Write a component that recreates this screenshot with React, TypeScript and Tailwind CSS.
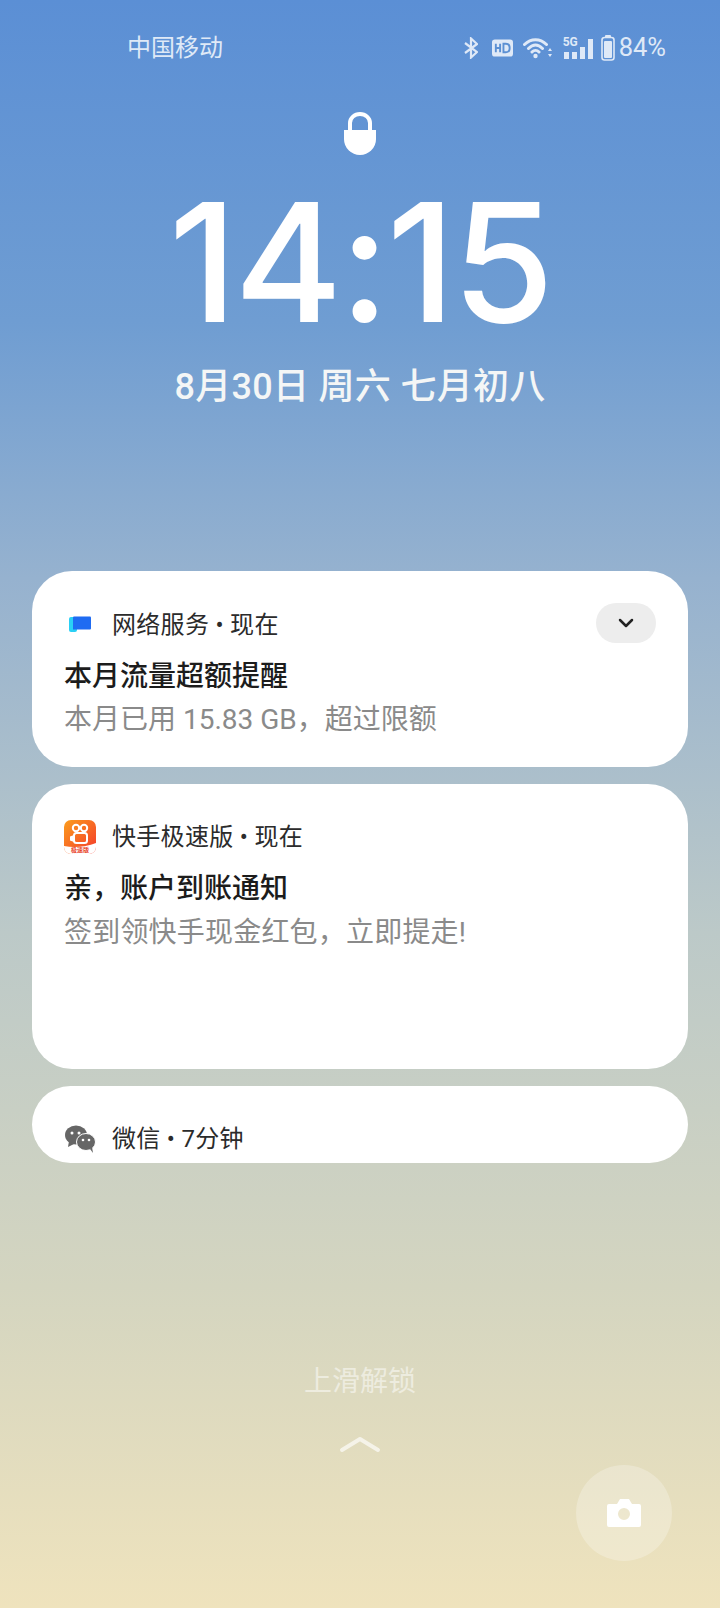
import React from "react";

const CJK = "font-['Roboto','Noto_Sans_CJK_SC',sans-serif]";

const StatusIcons = () => (
  <div className="flex items-center text-[#dfe9f7]">
    <svg width="14" height="22" viewBox="0 0 14 22" fill="none" stroke="currentColor" strokeWidth="2.200" className="mr-[14px]">
      <path d="M1 6l12 9-6 5.500V1.500L13 7 1 16" />
    </svg>
    <svg width="21" height="18" viewBox="0 0 22 18" className="mr-[10px]">
      <rect width="22" height="18" rx="3" fill="currentColor" />
      <path d="M4 4.500v9M8.500 4.500v9M4 9h4.500M12 4.500v9h2.500c2.500 0 4-1.600 4-4.500s-1.500-4.500-4-4.500z" fill="none" stroke="#5c90d3" strokeWidth="2" />
    </svg>
    <svg width="30" height="22" viewBox="0 0 30 22" fill="none" stroke="currentColor" strokeWidth="3" strokeLinecap="round" className="mr-[10px]">
      <path d="M1.500 7.500C8 1 17 1 23.500 7.500M5.500 11.500C10 7 15 7 19.500 11.500M9 15c2-2 5-2 7 0" />
      <circle cx="12.500" cy="19" r="2.200" fill="currentColor" stroke="none" />
      <path d="M27 11l2 3h-4zM27 20l2-3h-4z" fill="currentColor" stroke="none" />
    </svg>
    <div className="relative mr-[8px] h-[21px] w-[30px]">
      <span className="absolute left-0 top-[-2px] font-['Roboto',sans-serif] text-[12px] font-bold leading-[12px]">5G</span>
      <div className="absolute bottom-0 left-[1px] flex items-end gap-[3px]">
        <div className="h-[7px] w-[5px] bg-current" />
        <div className="h-[7px] w-[5px] bg-current" />
        <div className="h-[12px] w-[5px] bg-current" />
        <div className="h-[20px] w-[5px] bg-current" />
      </div>
    </div>
    <svg width="14" height="26" viewBox="0 0 14 26" className="mr-[4px]">
      <rect x="4" y="0" width="6" height="3" rx="1" fill="currentColor" />
      <rect x="1" y="2.500" width="12" height="22.500" rx="2.500" fill="none" stroke="currentColor" strokeWidth="1.600" />
      <rect x="3" y="6" width="8" height="17" rx="1" fill="currentColor" />
    </svg>
    <span className="font-['Roboto',sans-serif] text-[25.500px] leading-none">84%</span>
  </div>
);

const NetworkIcon = () => (
  <svg width="32" height="32" viewBox="0 0 32 32">
    <rect x="5" y="8" width="8" height="15" rx="2" fill="#2ad0f5" />
    <path d="M9 8.500a1 1 0 0 1 1-1h16a1 1 0 0 1 1 1v11a1 1 0 0 1-1 1H9z" fill="#1f6bf2" />
  </svg>
);

const KuaishouIcon = () => (
  <svg width="32" height="34" viewBox="0 0 32 34">
    <defs>
      <linearGradient id="ks" x1="0" y1="0" x2="1" y2="1">
        <stop offset="0" stopColor="#fb9d1c" />
        <stop offset="1" stopColor="#f4382c" />
      </linearGradient>
    </defs>
    <rect width="32" height="34" rx="7" fill="url(#ks)" />
    <path d="M0 26c10 2 22 1 32-3v4a7 7 0 0 1-7 7H7a7 7 0 0 1-7-7z" fill="#fff" />
    <circle cx="12" cy="8" r="3.200" fill="none" stroke="#fff" strokeWidth="2" />
    <circle cx="20" cy="8" r="3.200" fill="none" stroke="#fff" strokeWidth="2" />
    <rect x="10" y="13" width="13" height="10" rx="2.500" fill="none" stroke="#fff" strokeWidth="2" />
    <path d="M10 15l-4 1.500v4l4 1.500z" fill="#fff" />
    <text x="7" y="32" fontSize="6" fontWeight="700" fill="#e8432a" fontFamily="'Noto Sans CJK SC',sans-serif">极速版</text>
  </svg>
);

const WechatIcon = () => (
  <svg width="32" height="28" viewBox="0 0 32 28" fill="#666">
    <ellipse cx="12" cy="10" rx="11" ry="9.500" />
    <path d="M5 16l-1 6 6-3z" />
    <ellipse cx="22" cy="17" rx="9.500" ry="8.500" fill="#666" stroke="#fff" strokeWidth="1" />
    <path d="M26 24l3 4-1-6z" />
    <circle cx="8" cy="8" r="1.500" fill="#fff" />
    <circle cx="15" cy="8" r="1.500" fill="#fff" />
    <circle cx="19" cy="15" r="1.300" fill="#fff" />
    <circle cx="25" cy="15" r="1.300" fill="#fff" />
  </svg>
);

const AppRow = ({ icon, label }: { icon: React.ReactNode; label: string }) => (
  <div className="flex h-[32px] items-center">
    <div className="flex w-[32px] justify-center">{icon}</div>
    <span className="ml-[16px] text-[24px] leading-[32px] tracking-[0.3px] text-[#2b2b2b]">{label}</span>
  </div>
);

export default function App() {
  return (
    <div className={`flex h-[1608px] w-[720px] flex-col overflow-hidden bg-[linear-gradient(180deg,#5b8fd5_0%,#6f9dd2_20%,#96b2cf_36%,#bcc9c8_58%,#d4d5c0_80%,#efe3bd_100%)] ${CJK}`}>
      {/* Status bar */}
      <div className="flex items-center justify-between pl-[127px] pr-[54px] pt-[35px]">
        <span className="text-[24px] leading-[26px] text-[#dfe9f7]">中国移动</span>
        <StatusIcons />
      </div>

      {/* Lock + clock */}
      <div className="flex flex-col items-center pt-[51px]">
        <svg width="34" height="44" viewBox="0 0 34 44" fill="white">
          <path d="M7 20V11a10 9 0 0 1 20 0v9" fill="none" stroke="white" strokeWidth="4" />
          <path d="M1 18h32v9a16 16 0 0 1-32 0z" />
        </svg>
        <div className="mt-[16px] font-['Inter',sans-serif] text-[165px] font-medium leading-[180px] tracking-[-3px] text-white">14:15</div>
        <div className="mt-[12px] text-[36px] font-medium leading-[46px] tracking-[0.3px] text-[#f4f6f6]">8月30日 周六 七月初八</div>
      </div>

      {/* Notifications */}
      <div className="mt-[161px] flex flex-col gap-[17px] px-[32px]">
        <div className="relative h-[196px] rounded-[40px] bg-white px-[32px] pt-[38px]">
          <AppRow icon={<NetworkIcon />} label="网络服务 • 现在" />
          <div className="mt-[16px] text-[28px] font-medium leading-[40px] text-[#1c1c1c]">本月流量超额提醒</div>
          <div className="mt-[3px] text-[28px] leading-[40px] text-[#8a8a8a]">本月已用 15.83 GB，超过限额</div>
          <button className="absolute right-[32px] top-[32px] flex h-[40px] w-[60px] items-center justify-center rounded-full bg-[#ededed]">
            <svg width="16" height="10" viewBox="0 0 16 10" fill="none" stroke="#222" strokeWidth="2.500" strokeLinecap="round" strokeLinejoin="round">
              <path d="M2 2l6 6 6-6" />
            </svg>
          </button>
        </div>

        <div className="h-[285px] rounded-[40px] bg-white px-[32px] pt-[37px]">
          <AppRow icon={<KuaishouIcon />} label="快手极速版 • 现在" />
          <div className="mt-[16px] text-[28px] font-medium leading-[40px] text-[#1c1c1c]">亲，账户到账通知</div>
          <div className="mt-[4px] text-[28px] leading-[40px] tracking-[0.2px] text-[#8a8a8a]">签到领快手现金红包，立即提走!</div>
        </div>

        <div className="h-[77px] rounded-[40px] bg-white px-[32px] pt-[37px]">
          <AppRow icon={<WechatIcon />} label="微信 • 7分钟" />
        </div>
      </div>

      {/* Bottom hint */}
      <div className="mt-[199px] flex flex-col items-center">
        <span className="text-[28px] leading-[40px] text-white/50">上滑解锁</span>
        <svg width="42" height="18" viewBox="0 0 42 18" fill="none" stroke="white" strokeOpacity="0.65" strokeWidth="4" strokeLinecap="round" strokeLinejoin="round" className="mt-[33px]">
          <path d="M3 15L21 4l18 11" />
        </svg>
      </div>

      {/* Camera shortcut */}
      <div className="mr-[48px] mt-[12px] flex justify-end">
        <div className="flex h-[96px] w-[96px] items-center justify-center rounded-full bg-white/25">
          <svg width="36" height="30" viewBox="0 0 36 30">
            <path fillRule="evenodd" fill="white" d="M3 6h8l3-5h9l3 5h7a2 2 0 0 1 2 2v19a2 2 0 0 1-2 2H3a2 2 0 0 1-2-2V8a2 2 0 0 1 2-2zm15 4a6 6 0 1 0 0 12 6 6 0 0 0 0-12z" />
          </svg>
        </div>
      </div>
    </div>
  );
}
